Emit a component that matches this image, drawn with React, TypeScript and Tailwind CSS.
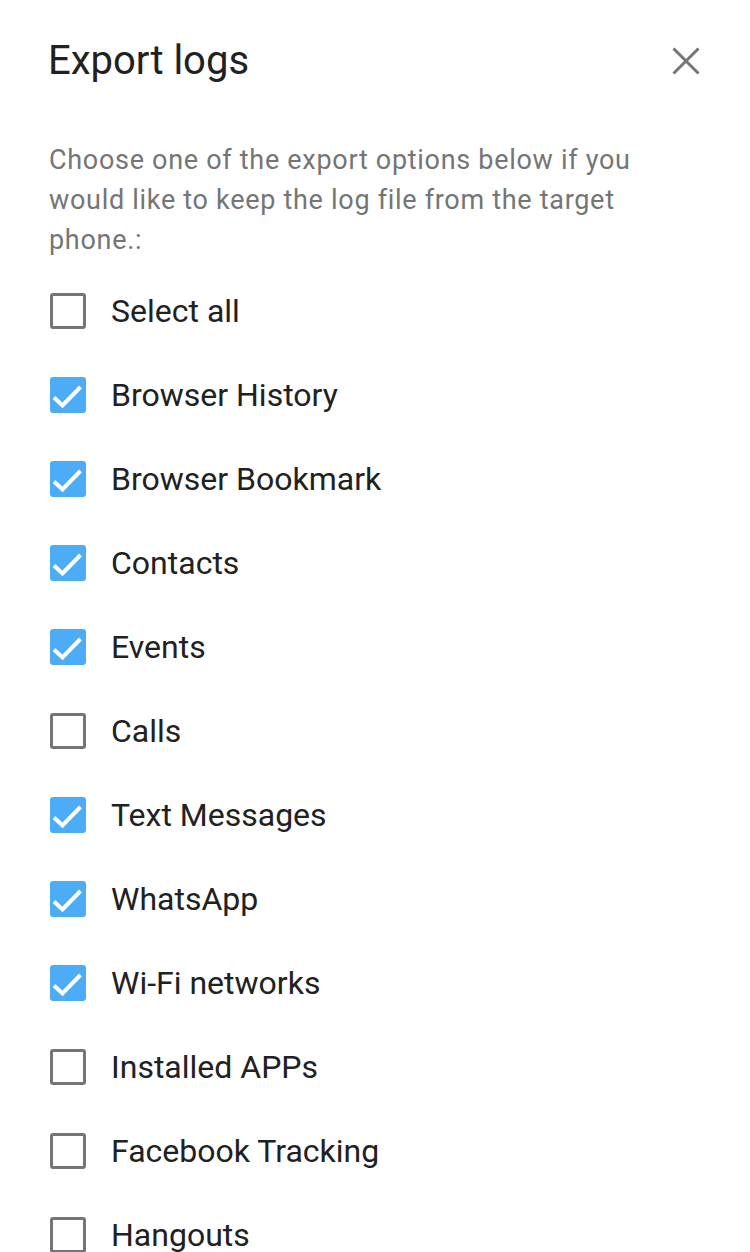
import { useState } from 'react';

type Item = { label: string; checked: boolean };

const ITEMS: Item[] = [
  { label: 'Browser History', checked: true },
  { label: 'Browser Bookmark', checked: true },
  { label: 'Contacts', checked: true },
  { label: 'Events', checked: true },
  { label: 'Calls', checked: false },
  { label: 'Text Messages', checked: true },
  { label: 'WhatsApp', checked: true },
  { label: 'Wi-Fi networks', checked: true },
  { label: 'Installed APPs', checked: false },
  { label: 'Facebook Tracking', checked: false },
  { label: 'Hangouts', checked: false },
];

function Box({ checked }: { checked: boolean }) {
  if (checked) {
    return (
      <span className="flex h-[36px] w-[36px] shrink-0 items-center justify-center rounded-[3px] bg-[#4dacf6]">
        <svg width="36" height="36" viewBox="0 0 36 36" fill="none">
          <path d="M4 20.5 L12.5 28.5 L30.5 10" stroke="#fff" strokeWidth="4" />
        </svg>
      </span>
    );
  }
  return <span className="h-[36px] w-[36px] shrink-0 rounded-[3px] border-[3px] border-[#757575] bg-white" />;
}

export default function App() {
  const [items, setItems] = useState(ITEMS);
  const all = items.every((i) => i.checked);

  const toggle = (idx: number) =>
    setItems((prev) => prev.map((it, i) => (i === idx ? { ...it, checked: !it.checked } : it)));

  return (
    <div className="min-h-screen bg-white font-['Roboto',sans-serif] text-[#212121]">
      <div className="flex items-center justify-between pl-[48px] pr-[50px] pt-[36px]">
        <h1 className="text-[40px] leading-[50px] font-normal">Export logs</h1>
        <button className="flex h-[28px] w-[28px] items-center justify-center" aria-label="Close">
          <svg width="28" height="28" viewBox="0 0 28 28" fill="none">
            <path d="M1.5 1.5 L26.5 26.5 M26.5 1.5 L1.5 26.5" stroke="#757575" strokeWidth="3" />
          </svg>
        </button>
      </div>

      <p className="mt-[54px] pl-[49px] pr-[70px] text-[27px] leading-[40px] tracking-[0.7px] text-[#757575]">
        Choose one of the export options below if you would like to keep the log file from the target phone.:
      </p>

      <ul className="mt-[9px] flex flex-col pl-[50px]">
        <li
          className="flex h-[84px] cursor-pointer items-center gap-[25px]"
          onClick={() => setItems((prev) => prev.map((it) => ({ ...it, checked: !all })))}
        >
          <Box checked={all} />
          <span className="text-[32px]">Select all</span>
        </li>
        {items.map((it, i) => (
          <li key={it.label} className="flex h-[84px] cursor-pointer items-center gap-[25px]" onClick={() => toggle(i)}>
            <Box checked={it.checked} />
            <span className="text-[32px]">{it.label}</span>
          </li>
        ))}
      </ul>
    </div>
  );
}
